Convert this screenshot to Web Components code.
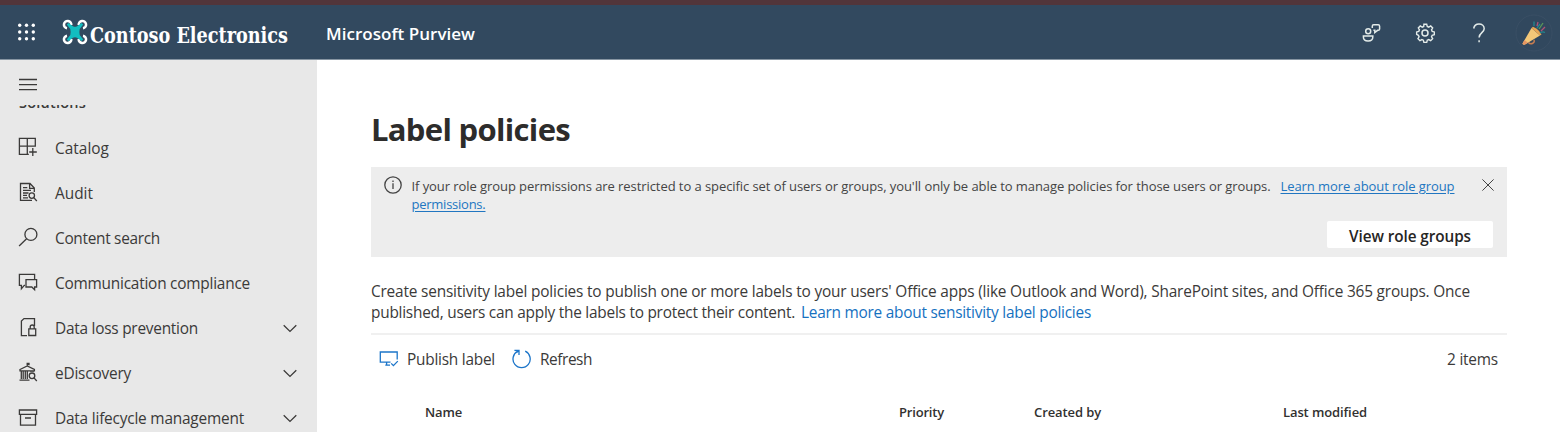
<!DOCTYPE html>
<html lang="en">
<head>
<meta charset="utf-8">
<title>Label policies</title>
<style>
html,body{margin:0;height:100%;overflow:hidden;background:#fff}
body{font-family:"Open Sans","Noto Sans",sans-serif;font-size:15.4px;color:#3b3a39}
</style>
</head>
<body>
<purview-app></purview-app>
<script>
// Sets a run of text to a fixed measure by spreading the tracking.
class FitText extends HTMLElement{
  connectedCallback(){
    const r=this.attachShadow({mode:'open'});
    r.innerHTML=`<style>:host{display:inline-block;white-space:pre;flex:none}span{display:inline-block;transform-origin:0 50%}</style><span><slot></slot></span>`;
    const s=r.querySelector('span'),w=+this.getAttribute('w');
    const n=s.getBoundingClientRect().width,len=this.textContent.length;
    if(!w||!n)return;
    this.style.width=w+'px';
    if(this.hasAttribute('scale'))s.style.transform=`scaleX(${w/n})`;
    else s.style.letterSpacing=((w-n)/len)+'px';
  }
}

const ICONS={
catalog:'<path d="M1.4 1.4H17.3V9.2H1.4zM9.3 1.4V17.4M1.4 9.2V17.4H10.8M11.2 15H18.8M14.8 11V19"/>',
audit:'<path d="M14 18.4H2.5V1.5H12L16.3 6V10M11.6 1.5V6.3H16.3M5 5.6H9.3M5 8.3H13M5 11H10.5M5 13.4H9M5 15.8H10"/><circle cx="13.8" cy="13.6" r="2.7"/><path d="M15.8 15.6L18.8 19"/>',
search:'<circle cx="12.9" cy="7.4" r="6"/><path d="M8.6 11.7L1.1 19"/>',
comm:'<path d="M7 13.4H6.3L3.4 16.7V13.4H1.4V2.4H16.6V7M8 7.6H18.6V15H16.6V17.7L13.8 15H8z"/>',
dlp:'<path d="M9 18.6H3.4V4L6 1.6H16.5V9M10.8 11.8H17.7V18.5H10.8zM12.2 11.8V10a2 2 0 0 1 4 0V11.8"/>',
edisc:'<path d="M2 7.5L9.2 4L16.4 7.5V8.8H2zM9.2 4V1.5H11V2.5H9.2M3.3 9V17M5.2 9V17M7.3 9V17M9.3 9V17M13 8.8V10M15 8.8V10M1.5 18.2H11.5"/><circle cx="14" cy="13.8" r="2.8"/><path d="M16 15.9L18.8 19"/>',
life:'<path d="M1.4 3H18.6V7.4H1.4zM2.5 7.4V18.2H17.5V7.4M7 11H13"/>',
chev:'<path d="M3.7 6.2L10 12.4L16.3 6.2"/>',
menu:'<path d="M1 4.5H19M1 9.6H19M1 14.6H19"/>',
info:'<circle cx="10" cy="10" r="8.2"/><path d="M10 8.3V14M10 5.6V7"/>',
close:'<path d="M4.4 4.4L15.6 15.6M15.6 4.4L4.4 15.6"/>',
publish:'<path d="M11.5 13.2H1.3V3H18.2V10.5M6.3 16.2H11M7.6 13.2V16M12.2 14.4L14.4 16.6L18.8 12.1"/>',
refresh:'<path d="M13.2 2.2A8.6 8.6 0 1 1 6 2.2M2.4 1.3H7V6M7 1.5L5 3.2"/>',
feedback:'<circle cx="7.2" cy="8.2" r="2.5"/><path d="M2.400 13H11.800V14C11.800 16.600 9.800 18 7.100 18S2.400 16.600 2.400 14zM11.300 4.900V3.200C11.300 2.300 11.700 1.800 12.600 1.800H17.200C18.100 1.800 18.600 2.300 18.600 3.200V5.900C18.600 6.900 18.100 7.300 17.200 7.300H16.600L13.800 9.500V7.300H12.400"/>',
gear:'<circle cx="10" cy="10" r="3"/><path d="M8.5 1.3h3l.6 2.3 1.6.7 2.1-1.2 2.1 2.1-1.2 2.1.7 1.6 2.3.6v3l-2.3.6-.7 1.6 1.2 2.1-2.1 2.1-2.1-1.2-1.6.7-.6 2.3h-3l-.6-2.3-1.6-.7-2.1 1.2-2.1-2.1 1.2-2.1-.7-1.6L.7 12V9.500l2.300-.6.7-1.600L2.500 5.200l2.100-2.100 2.100 1.200 1.600-.7z" transform="translate(1 .1) scale(.93)"/>',
help:'<path d="M4.700 5.500C5.200 2.800 7.200 1.100 10 1.100C13 1.100 15.200 3 15.200 5.700C15.200 9.600 10.100 9.800 10.100 14.600M10.100 17.300V19.200"/>'
};
class UiIcon extends HTMLElement{
  connectedCallback(){
    this.attachShadow({mode:'open'}).innerHTML=`<style>:host{display:block;width:20px;height:20px;flex:none}svg{display:block;width:100%;height:100%;fill:none;stroke:currentColor;stroke-width:var(--stroke,1.3)}</style><svg viewBox="0 0 20 20">${ICONS[this.getAttribute('name')]}</svg>`;
  }
}

class AppHeader extends HTMLElement{
  connectedCallback(){
    let dots='';
    for(const y of [3.200,10,16.800])for(const x of [2.700,9.500,16.300])dots+=`<circle cx="${x}" cy="${y}" r="1.700"/>`;
    this.attachShadow({mode:'open'}).innerHTML=`<style>
:host{display:flex;box-sizing:border-box;height:60.400px;border-top:5px solid #52353a;border-bottom:1px solid #8795a2;background:#32495f;color:#fff;align-items:center;padding:0 7px 0 17px}
svg{display:block;flex:none}
.logo{margin-left:25px}
.brand{font:bold 22px/30px "DejaVu Serif Condensed","DejaVu Serif",serif;font-stretch:condensed;margin:5px 0 0 2px}
.product{font-size:17px;font-weight:600;line-height:24px;margin:3px 0 0 38px}
.tools{display:flex;margin-left:auto;align-items:center;color:#e3ebe9;--stroke:1.500}
.tools ui-icon+ui-icon{margin-left:34px}
.tools ui-icon{margin-top:1px}
.avatar{margin:1px 0 0 26px}
</style>
<svg width="20" height="20" viewBox="0 0 20 20" fill="#fff">${dots}</svg>
<svg class="logo" width="26" height="30" viewBox="0 0 26 30"><g fill="none" stroke="#fff" stroke-width="2.500"><path d="M5 11.300A3.700 3.700 0 1 1 9.300 8M16.700 8A3.700 3.700 0 1 1 21 11.300M9.300 22A3.700 3.700 0 1 1 5 18.700M21 18.700A3.700 3.700 0 1 1 16.700 22"/></g><path d="M6.500 6L11 9.200Q13 10.200 15 9.200L19.500 6L21.200 7.600L17.700 12Q17 15 17.700 18L21.200 22.400L19.500 24L15 20.800Q13 19.800 11 20.800L6.500 24L4.800 22.400L8.300 18Q9 15 8.300 12L4.800 7.600z" fill="#12bec0"/></svg>
<fit-text class="brand" w="198" scale>Contoso Electronics</fit-text>
<fit-text class="product" w="149">Microsoft Purview</fit-text>
<div class="tools"><ui-icon name="feedback"></ui-icon><ui-icon name="gear"></ui-icon><ui-icon name="help"></ui-icon>
<svg class="avatar" width="38" height="38" viewBox="0 0 38 38"><circle cx="19" cy="19" r="18" fill="#31485e" stroke="#3a4f65"/><path d="M13.500 28.500a3 2.300 0 0 0 5.300-2.500" fill="none" stroke="#c87d50" stroke-width="1.500"/><path d="M7.500 29.500L16.500 14L25 21.500L10 30.500Q7.500 31 7.500 29.500z" fill="#f4c878"/><path d="M7.500 29.500L9.500 26L13 28.700L10 30.500Q7.500 31 7.500 29.500z" fill="#e79763"/><path d="M16.500 14L25 21.500L26.500 20.500Q24 15.500 18 12.700z" fill="#e9a653"/><g fill="none" stroke-width="1.300"><path d="M19 12V7.500M22 14L25 10M25 19Q27 17 30 18.500" stroke="#22878f"/><path d="M22 12L23 8M26 17L30 13" stroke="#b05278"/><path d="M24 15L28 9" stroke="#5a9a58"/></g></svg></div>`;
  }
}

class NavItem extends HTMLElement{
  connectedCallback(){
    this.attachShadow({mode:'open'}).innerHTML=`<style>:host{display:flex;height:45.100px;align-items:center;padding:0 17px 0 18px}
.i{margin-bottom:3px}fit-text{margin:1px 0 0 17px;line-height:24px}.c{margin-left:auto}</style>
<ui-icon class="i" name="${this.getAttribute('icon')}"></ui-icon><fit-text w="${this.getAttribute('w')}">${this.getAttribute('label')}</fit-text>${this.hasAttribute('group')?'<ui-icon class="c" name="chev"></ui-icon>':''}`;
  }
}

class SideNav extends HTMLElement{
  connectedCallback(){
    this.attachShadow({mode:'open'}).innerHTML=`<style>:host{display:block;box-sizing:border-box;width:317px;background:#e8e8e8;overflow:hidden;padding-top:14.500px}
.menu{margin-left:18px}
.scroll{margin-top:10.500px;overflow:hidden;height:340px}
.section{display:block;height:20px;padding-left:19px;font-weight:600;font-size:14.500px;line-height:20px;margin-top:-12px}
.list{margin-top:12.200px}
nav-item{padding-right:17px}</style>
<ui-icon class="menu" name="menu"></ui-icon>
<div class="scroll"><div class="section"><fit-text w="67">Solutions</fit-text></div><div class="list">
<nav-item icon="catalog" label="Catalog" w="54"></nav-item>
<nav-item icon="audit" label="Audit" w="38"></nav-item>
<nav-item icon="search" label="Content search" w="105"></nav-item>
<nav-item icon="comm" label="Communication compliance" w="195"></nav-item>
<nav-item icon="dlp" label="Data loss prevention" w="143" group></nav-item>
<nav-item icon="edisc" label="eDiscovery" w="76" group></nav-item>
<nav-item icon="life" label="Data lifecycle management" w="189" group></nav-item>
</div></div>`;
  }
}

class InfoBanner extends HTMLElement{
  connectedCallback(){
    this.attachShadow({mode:'open'}).innerHTML=`<style>:host{display:flex;flex-direction:column;box-sizing:border-box;height:90px;background:#ededed;padding:8px 13.500px 9px 12px;justify-content:space-between}
.top{display:flex;color:#444}
.text{margin:1.600px 0 0 8.500px;font-size:13px;line-height:18px;flex:1}
.text div{display:flex;gap:10px}
a{color:#2176c1}
.x{margin:0 -5px 0 0;--stroke:1;width:20px}
button{align-self:flex-end;width:166px;height:27px;border:0;border-radius:2px;background:#fff;padding:3px 0 0;font:600 15.300px/24px "Open Sans",sans-serif;color:#262524}
</style>
<div class="top"><ui-icon name="info"></ui-icon><div class="text"><div><fit-text w="859">If your role group permissions are restricted to a specific set of users or groups, you'll only be able to manage policies for those users or groups.</fit-text><a><fit-text w="174">Learn more about role group</fit-text></a></div><div><a><fit-text w="74">permissions.</fit-text></a></div></div><ui-icon class="x" name="close"></ui-icon></div>
<button><fit-text w="122">View role groups</fit-text></button>`;
    this.shadowRoot.querySelectorAll('a fit-text').forEach(f=>{const s=f.shadowRoot.querySelector('span').style;s.textDecoration='underline';s.textUnderlineOffset='2px'});
  }
}

class ToolAction extends HTMLElement{
  connectedCallback(){
    this.attachShadow({mode:'open'}).innerHTML=`<style>:host{display:flex;align-items:center;gap:8px;line-height:24px}ui-icon{color:#1c75c9;--stroke:1.300;margin-bottom:2px}</style><ui-icon name="${this.getAttribute('icon')}"></ui-icon><slot></slot>`;
  }
}

class PolicyPage extends HTMLElement{
  connectedCallback(){
    this.attachShadow({mode:'open'}).innerHTML=`<style>:host{display:block;box-sizing:border-box;padding:46.600px 54px 0 54px;flex:1;min-width:0;background:#fff}
h1{margin:0 0 16px;font-size:31px;line-height:44px;font-weight:700;color:#2d2c2b}
info-banner{width:1135.500px}
.desc{margin-top:24px;line-height:21.500px}
.desc div{display:flex;gap:6px}
.desc a{color:#1671bf}
.bar{display:flex;align-items:center;width:1136px;height:51px;box-sizing:border-box;margin-top:9px;border-top:2px solid #f0f0f0;padding:2px 9px 0 8px;gap:17px}
.count{margin-left:auto;line-height:24px}
.head{display:grid;grid-template-columns:474px 135px 249px 1fr;padding-left:54px;margin-top:18.500px;font-size:13px;font-weight:600;line-height:20px;color:#323130}
</style>
<h1><fit-text w="199">Label policies</fit-text></h1>
<info-banner></info-banner>
<div class="desc"><div><fit-text w="1099">Create sensitivity label policies to publish one or more labels to your users' Office apps (like Outlook and Word), SharePoint sites, and Office 365 groups. Once</fit-text></div>
<div><fit-text w="424">published, users can apply the labels to protect their content.</fit-text><a><fit-text w="290">Learn more about sensitivity label policies</fit-text></a></div></div>
<div class="bar"><tool-action icon="publish"><fit-text w="88">Publish label</fit-text></tool-action><tool-action icon="refresh"><fit-text w="52">Refresh</fit-text></tool-action><fit-text class="count" w="51">2 items</fit-text></div>
<div class="head"><fit-text w="37">Name</fit-text><fit-text w="45">Priority</fit-text><fit-text w="67">Created by</fit-text><fit-text w="84">Last modified</fit-text></div>`;
  }
}

class PurviewApp extends HTMLElement{
  connectedCallback(){
    this.attachShadow({mode:'open'}).innerHTML=`<style>:host{display:flex;flex-direction:column;height:432px;overflow:hidden}app-header{flex:none}.body{display:flex;flex:1;min-height:0}side-nav{flex:none}</style><app-header></app-header><div class="body"><side-nav></side-nav><policy-page></policy-page></div>`;
  }
}
customElements.define('fit-text',FitText);
customElements.define('ui-icon',UiIcon);
customElements.define('app-header',AppHeader);
customElements.define('nav-item',NavItem);
customElements.define('side-nav',SideNav);
customElements.define('info-banner',InfoBanner);
customElements.define('tool-action',ToolAction);
customElements.define('policy-page',PolicyPage);
customElements.define('purview-app',PurviewApp);
</script>
</body>
</html>
